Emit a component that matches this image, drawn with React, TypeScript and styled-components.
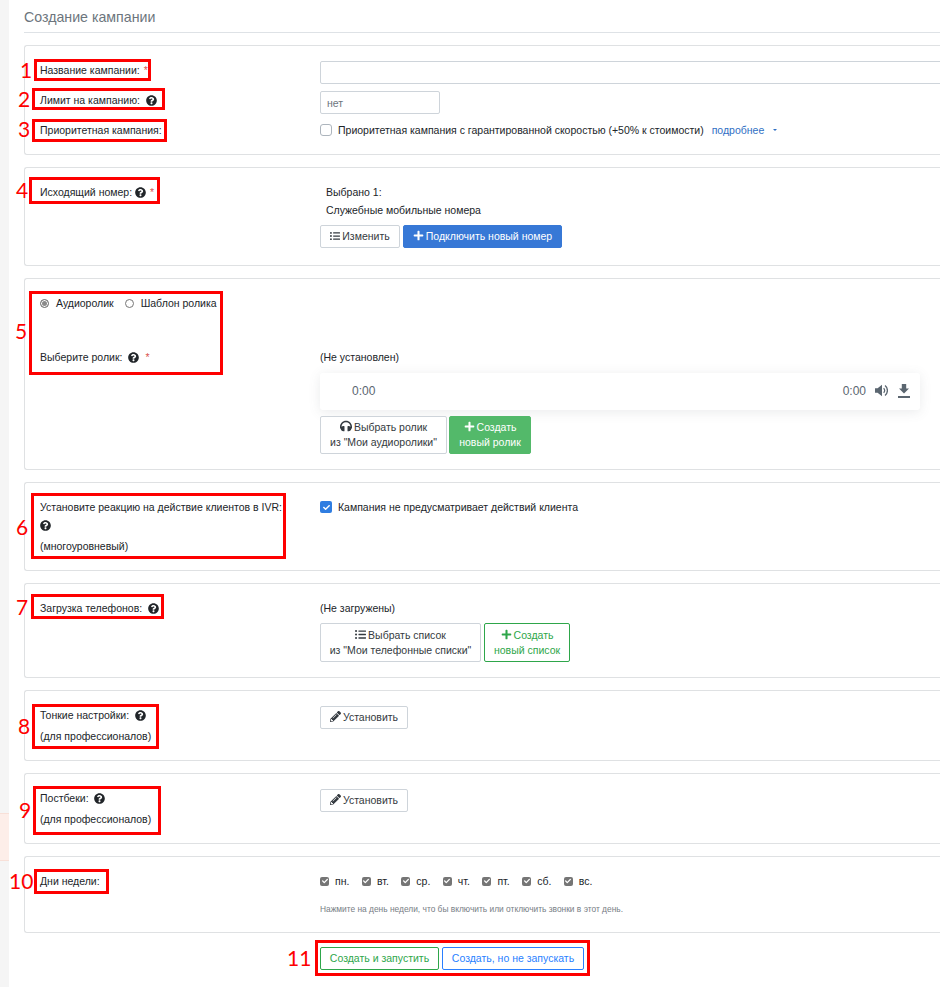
import React from 'react';
import styled, { createGlobalStyle } from 'styled-components';
import { FaQuestionCircle, FaListUl, FaPlus, FaHeadphones, FaPencilAlt, FaCheck } from 'react-icons/fa';

const GlobalStyle = createGlobalStyle`
    html, body {
        margin: 0;
        padding: 0;
        background: #fff;
        overflow: hidden;
    }
    body {
        font-family: "Liberation Sans", Arial, sans-serif;
        font-size: 10.5px;
        color: #212529;
    }
    * { box-sizing: border-box; }
`;

/**
 * * page frame
 */
const Page = styled.div`
    position: relative;
    display: flex;
    width: 940px;
    height: 987px;
    overflow: hidden;
`;

const SideStrip = styled.aside`
    flex: 0 0 9px;
    background: #f5f5f5;
    padding-top: 813px;
`;

const SideAlert = styled.div`
    height: 48px;
    background: #fdeee9;
    border-top: 1px solid #f8e0d8;
    border-bottom: 1px solid #f8e0d8;
`;

const Main = styled.main`
    flex: 0 0 960px;
    padding-left: 15px;
`;

const Title = styled.h1`
    margin: 0 0 12px;
    height: 33px;
    padding-top: 9px;
    font-size: 14.2px;
    line-height: 16px;
    font-weight: 400;
    color: #6c757d;
    border-bottom: 1px solid #dee2e6;
`;

/**
 * * form cards
 */
const Card = styled.section<{ $height: number; $top: number }>`
    display: flex;
    flex-direction: column;
    height: ${(p) => p.$height}px;
    margin-bottom: 12px;
    padding: ${(p) => p.$top}px 0 0 15px;
    border: 1px solid #dfe1e3;
    border-right: 0;
    border-radius: 3px 0 0 3px;
`;

const Row = styled.div<{ $gap?: number }>`
    display: grid;
    grid-template-columns: 280px 1fr;
    margin-bottom: ${(p) => p.$gap ?? 0}px;
    align-items: start;
`;

const Label = styled.div`
    line-height: 18px;
`;

const LabelLine = styled.div<{ $gap?: number }>`
    display: flex;
    align-items: center;
    line-height: 18px;
    min-height: 18px;
    white-space: pre;
    margin-bottom: ${(p) => p.$gap ?? 0}px;
`;

const Required = styled.span<{ $left?: number }>`
    color: #d9534f;
    margin-left: ${(p) => p.$left ?? 4}px;
`;

const Help = styled(FaQuestionCircle)<{ $left?: number }>`
    width: 11px;
    height: 11px;
    color: #212529;
    margin-left: ${(p) => p.$left ?? 6}px;
    flex: none;
`;

const TextInput = styled.input<{ $width?: number }>`
    display: block;
    width: ${(p) => (p.$width ? `${p.$width}px` : '100%')};
    height: 23px;
    padding: 0 6px;
    border: 1px solid #ced4da;
    border-radius: 2px;
    font: inherit;
    color: #6c757d;
    background: #fff;
`;

const CheckLine = styled.div`
    display: flex;
    align-items: center;
    line-height: 18px;
`;

const BlankBox = styled.span`
    width: 12px;
    height: 12px;
    border: 1px solid #adb5bd;
    border-radius: 3px;
    margin-right: 6px;
    background: #fff;
    flex: none;
`;

const TickBox = styled.span<{ $color: string }>`
    display: inline-flex;
    align-items: center;
    justify-content: center;
    width: 12px;
    height: 12px;
    border-radius: 2px;
    margin-right: 6px;
    background: ${(p) => p.$color};
    color: #fff;
    font-size: 7px;
    flex: none;
`;

const MoreLink = styled.a`
    margin-left: 8px;
    color: #2f6fc4;
    text-decoration: none;
`;

const Caret = styled.span`
    width: 0;
    height: 0;
    margin-left: 9px;
    border-left: 2px solid transparent;
    border-right: 2px solid transparent;
    border-top: 2px solid #2f6fc4;
`;

const InfoText = styled.div<{ $indent?: number }>`
    line-height: 18px;
    padding-left: ${(p) => p.$indent ?? 0}px;
`;

/**
 * * buttons
 */
const ButtonRow = styled.div<{ $top?: number; $gap?: number }>`
    display: flex;
    gap: ${(p) => p.$gap ?? 3}px;
    margin-top: ${(p) => p.$top ?? 0}px;
`;

type Variant = 'default' | 'blue' | 'green' | 'outlineGreen' | 'outlineBlue';

const Button = styled.button<{ $variant?: Variant; $width?: number; $height?: number }>`
    display: inline-block;
    width: ${(p) => (p.$width ? `${p.$width}px` : 'auto')};
    height: ${(p) => p.$height ?? 23}px;
    padding: 0;
    font: inherit;
    line-height: 15px;
    text-align: center;
    border-radius: 2px;
    border: 1px solid ${(p) => ({
        default: '#ced4da',
        blue: '#3778d6',
        green: '#53b96a',
        outlineGreen: '#2ea64a',
        outlineBlue: '#2a7fff',
    }[p.$variant ?? 'default'])};
    background: ${(p) => ({
        default: '#fff',
        blue: '#3778d6',
        green: '#53b96a',
        outlineGreen: '#fff',
        outlineBlue: '#fff',
    }[p.$variant ?? 'default'])};
    color: ${(p) => ({
        default: '#343a40',
        blue: '#fff',
        green: '#fff',
        outlineGreen: '#2ea64a',
        outlineBlue: '#2a7fff',
    }[p.$variant ?? 'default'])};

    svg {
        vertical-align: -1px;
        margin-right: 2px;
    }
`;

const Footer = styled.div`
    display: flex;
    gap: 3px;
    padding: 2px 0 0 296px;
`;

/**
 * * audio player
 */
const Player = styled.div`
    display: flex;
    align-items: center;
    justify-content: space-between;
    width: 600px;
    height: 37px;
    margin-top: 7px;
    padding: 0 10px 2px 32px;
    border-radius: 3px;
    background: #fff;
    box-shadow: 0 2px 12px rgba(90, 100, 110, 0.13);
    font-size: 12px;
    color: #5b6670;
`;

const PlayerControls = styled.div`
    display: flex;
    align-items: center;
    gap: 10px;
`;

const PlayerTime = styled.span`
    margin-right: -1px;
`;

const VolumeIcon = () => (
    <svg width="13" height="13" viewBox="0 0 13 13" fill="none">
        <path d="M0 4.2h2.6L7 .8v11.4L2.6 8.8H0z" fill="currentColor" />
        <path d="M8.6 4.2a3 3 0 0 1 0 4.6" stroke="currentColor" strokeWidth="1.3" />
        <path d="M10 1.6a6.2 6.2 0 0 1 0 9.8" stroke="currentColor" strokeWidth="1.3" />
    </svg>
);

const DownloadIcon = () => (
    <svg width="12" height="14" viewBox="0 0 12 14" fill="currentColor">
        <path d="M3.8 0h4.4v4.6H11L6 9.6 1 4.6h2.8z" />
        <rect x="0" y="12" width="12" height="2" />
    </svg>
);

/**
 * * radios and week days
 */
const RadioGroup = styled.div`
    display: flex;
    align-items: center;
    margin-bottom: 39px;
    padding-top: 3px;
`;

const Radio = styled.span<{ $checked?: boolean }>`
    display: inline-block;
    width: 9px;
    height: 9px;
    margin-right: 7px;
    border: 1px solid #777;
    border-radius: 50%;
    background: ${(p) => (p.$checked ? '#8a8a8a' : '#fff')};
    box-shadow: ${(p) => (p.$checked ? 'inset 0 0 0 1px #fff' : 'none')};
`;

const RadioText = styled.span`
    margin-right: 11px;
`;

const Days = styled.div`
    display: flex;
    align-items: center;
    gap: 12.5px;
    line-height: 18px;
`;

const Day = styled.label`
    display: flex;
    align-items: center;
`;

const DayBox = styled(TickBox)`
    width: 9px;
    height: 9px;
    margin-right: 6px;
    font-size: 6px;
`;

const Hint = styled.div`
    margin-top: 13px;
    font-size: 8.4px;
    line-height: 12px;
    color: #777e85;
`;

/**
 * * red annotations drawn over the form
 */
const Frame = styled.div<{ $x: number; $y: number; $w: number; $h: number }>`
    position: absolute;
    left: ${(p) => p.$x}px;
    top: ${(p) => p.$y}px;
    width: ${(p) => p.$w}px;
    height: ${(p) => p.$h}px;
    border: 3px solid #fe0000;
    pointer-events: none;
`;

const Mark = styled.span<{ $x: number; $y: number }>`
    position: absolute;
    left: ${(p) => p.$x}px;
    top: ${(p) => p.$y}px;
    font-family: Lato, sans-serif;
    font-size: 21px;
    line-height: 24px;
    color: #fe0000;
`;

const ANNOTATIONS = [
    { n: '1', nx: 20, ny: 58, x: 34, y: 59, w: 117, h: 22 },
    { n: '2', nx: 18, ny: 87, x: 32, y: 88, w: 133, h: 22 },
    { n: '3', nx: 18, ny: 117, x: 32, y: 119, w: 135, h: 23 },
    { n: '4', nx: 16, ny: 178, x: 29, y: 177, w: 131, h: 27 },
    { n: '5', nx: 15, ny: 319, x: 29, y: 291, w: 194, h: 84 },
    { n: '6', nx: 16, ny: 515, x: 31, y: 493, w: 255, h: 66 },
    { n: '7', nx: 16, ny: 595, x: 31, y: 594, w: 133, h: 25 },
    { n: '8', nx: 18, ny: 714, x: 32, y: 704, w: 127, h: 45 },
    { n: '9', nx: 19, ny: 798, x: 33, y: 786, w: 128, h: 49 },
    { n: '10', nx: 9, ny: 869, x: 34, y: 869, w: 75, h: 25 },
    { n: '11', nx: 287, ny: 946, x: 315, y: 940, w: 275, h: 36 },
];

const DAYS = ['пн.', 'вт.', 'ср.', 'чт.', 'пт.', 'сб.', 'вс.'];

export default function App() {
    return (
        <>
            <GlobalStyle />
            <Page>
                <SideStrip>
                    <SideAlert />
                </SideStrip>
                <Main>
                    <Title>Создание кампании</Title>

                    <Card $height={110} $top={15}>
                        <Row $gap={7}>
                            <LabelLine>Название кампании:<Required>*</Required></LabelLine>
                            <TextInput />
                        </Row>
                        <Row $gap={7}>
                            <LabelLine>Лимит на кампанию:<Help /></LabelLine>
                            <TextInput $width={120} defaultValue="нет" />
                        </Row>
                        <Row>
                            <Label>Приоритетная кампания:</Label>
                            <CheckLine>
                                <BlankBox />
                                Приоритетная кампания с гарантированной скоростью (+50% к стоимости)
                                <MoreLink>подробнее</MoreLink>
                                <Caret />
                            </CheckLine>
                        </Row>
                    </Card>

                    <Card $height={99} $top={15}>
                        <Row>
                            <LabelLine>Исходящий номер:<Help $left={3} /><Required>*</Required></LabelLine>
                            <div>
                                <InfoText $indent={6}>Выбрано 1:</InfoText>
                                <InfoText $indent={6}>Служебные мобильные номера</InfoText>
                                <ButtonRow $top={6}>
                                    <Button $width={80}><FaListUl size={10} />Изменить</Button>
                                    <Button $variant="blue" $width={159}><FaPlus size={11} />Подключить новый номер</Button>
                                </ButtonRow>
                            </div>
                        </Row>
                    </Card>

                    <Card $height={192} $top={15}>
                        <RadioGroup>
                            <Radio $checked />
                            <RadioText>Аудиоролик</RadioText>
                            <Radio />
                            <RadioText>Шаблон ролика</RadioText>
                        </RadioGroup>
                        <Row>
                            <LabelLine>Выберите ролик:<Help /><Required $left={6}>*</Required></LabelLine>
                            <div>
                                <InfoText>(Не установлен)</InfoText>
                                <Player>
                                    <span>0:00</span>
                                    <PlayerControls>
                                        <PlayerTime>0:00</PlayerTime>
                                        <VolumeIcon />
                                        <DownloadIcon />
                                    </PlayerControls>
                                </Player>
                                <ButtonRow $top={6} $gap={2}>
                                    <Button $width={127} $height={38}><FaHeadphones size={12} />Выбрать ролик<br />из "Мои аудиоролики"</Button>
                                    <Button $variant="green" $width={82} $height={38}><FaPlus size={11} />Создать<br />новый ролик</Button>
                                </ButtonRow>
                            </div>
                        </Row>
                    </Card>

                    <Card $height={89} $top={15}>
                        <Row>
                            <Label>
                                <LabelLine>Установите реакцию на действие клиентов в IVR:</LabelLine>
                                <LabelLine $gap={3}><Help $left={0} /></LabelLine>
                                <LabelLine>(многоуровневый)</LabelLine>
                            </Label>
                            <CheckLine>
                                <TickBox $color="#2f7de1"><FaCheck /></TickBox>
                                Кампания не предусматривает действий клиента
                            </CheckLine>
                        </Row>
                    </Card>

                    <Card $height={95} $top={15}>
                        <Row>
                            <LabelLine>Загрузка телефонов:<Help /></LabelLine>
                            <div>
                                <InfoText>(Не загружены)</InfoText>
                                <ButtonRow $top={6}>
                                    <Button $width={161} $height={39}><FaListUl size={11} />Выбрать список<br />из "Мои телефонные списки"</Button>
                                    <Button $variant="outlineGreen" $width={86} $height={39}><FaPlus size={11} />Создать<br />новый список</Button>
                                </ButtonRow>
                            </div>
                        </Row>
                    </Card>

                    <Card $height={71} $top={15}>
                        <Row>
                            <Label>
                                <LabelLine $gap={3}>Тонкие настройки:<Help /></LabelLine>
                                <LabelLine>(для профессионалов)</LabelLine>
                            </Label>
                            <ButtonRow>
                                <Button $width={88}><FaPencilAlt size={11} />Установить</Button>
                            </ButtonRow>
                        </Row>
                    </Card>

                    <Card $height={71} $top={15}>
                        <Row>
                            <Label>
                                <LabelLine $gap={3}>Постбеки:<Help $left={5} /></LabelLine>
                                <LabelLine>(для профессионалов)</LabelLine>
                            </Label>
                            <ButtonRow>
                                <Button $width={88}><FaPencilAlt size={11} />Установить</Button>
                            </ButtonRow>
                        </Row>
                    </Card>

                    <Card $height={77} $top={15}>
                        <Row>
                            <LabelLine>Дни недели:</LabelLine>
                            <div>
                                <Days>
                                    {DAYS.map((day) => (
                                        <Day key={day}>
                                            <DayBox $color="#757575"><FaCheck /></DayBox>
                                            {day}
                                        </Day>
                                    ))}
                                </Days>
                                <Hint>Нажмите на день недели, что бы включить или отключить звонки в этот день.</Hint>
                            </div>
                        </Row>
                    </Card>

                    <Footer>
                        <Button $variant="outlineGreen" $width={119}>Создать и запустить</Button>
                        <Button $variant="outlineBlue" $width={142}>Создать, но не запускать</Button>
                    </Footer>
                </Main>

                {ANNOTATIONS.map((a) => (
                    <React.Fragment key={a.n}>
                        <Mark $x={a.nx} $y={a.ny}>{a.n}</Mark>
                        <Frame $x={a.x} $y={a.y} $w={a.w} $h={a.h} />
                    </React.Fragment>
                ))}
            </Page>
        </>
    );
}
